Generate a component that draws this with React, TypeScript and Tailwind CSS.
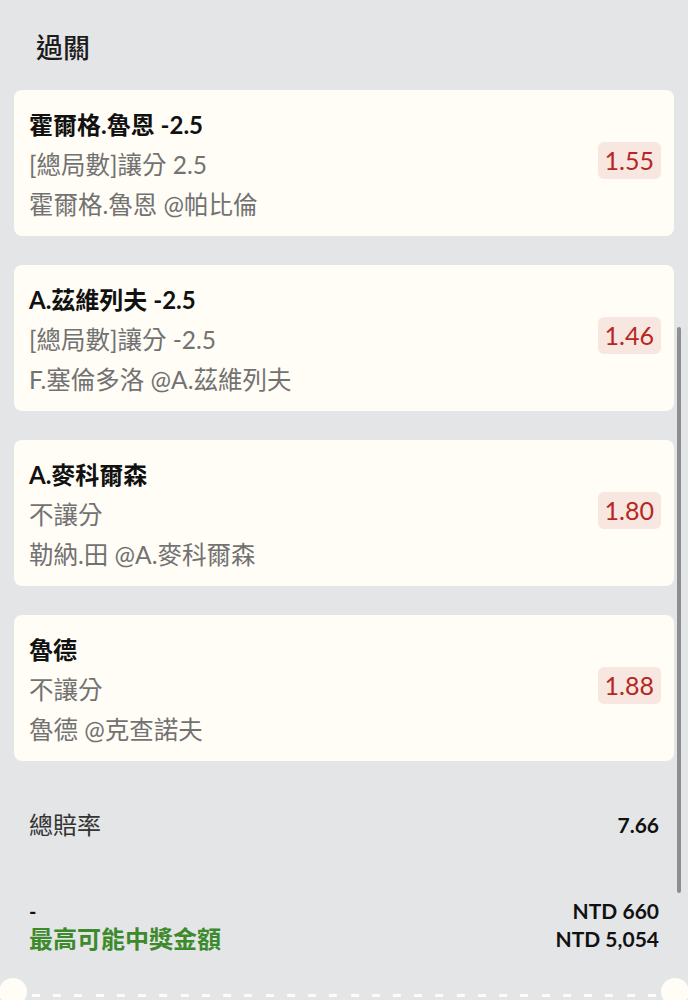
import React from 'react';

type Bet = {
  title: string;
  market: string;
  match: string;
  odds: string;
};

const bets: Bet[] = [
  { title: '霍爾格.魯恩 -2.5', market: '[總局數]讓分 2.5', match: '霍爾格.魯恩 @帕比倫', odds: '1.55' },
  { title: 'A.茲維列夫 -2.5', market: '[總局數]讓分 -2.5', match: 'F.塞倫多洛 @A.茲維列夫', odds: '1.46' },
  { title: 'A.麥科爾森', market: '不讓分', match: '勒納.田 @A.麥科爾森', odds: '1.80' },
  { title: '魯德', market: '不讓分', match: '魯德 @克查諾夫', odds: '1.88' },
];

const BetCard = ({ bet }: { bet: Bet }) => (
  <div className="flex items-center justify-between rounded-[8px] bg-[#fffdf5] pl-[15px] pr-[13px] pt-[15px] pb-[11px]">
    <div className="flex flex-col">
      <div className="text-[24px] font-bold leading-[40px] text-[#111]">{bet.title}</div>
      <div className="text-[24.5px] leading-[40px] text-[#727272]">{bet.market}</div>
      <div className="text-[24.5px] leading-[40px] text-[#727272]">{bet.match}</div>
    </div>
    <div className="-mt-[10px] rounded-[6px] bg-[#f8e6e0] px-[7px] py-[2px] text-[25px] leading-[33px] text-[#b52822]">
      {bet.odds}
    </div>
  </div>
);

const App = () => {
  return (
    <div className="relative h-[1000px] overflow-hidden bg-[#e4e5e7] font-['Lato','Noto_Sans_CJK_TC',sans-serif]">
      <div className="px-[14px]">
        <div className="flex h-[90px] items-center pl-[22px] pt-[6px] text-[27px] font-medium text-[#1c1c1c]">過關</div>

        <div className="flex flex-col gap-[29px]">
          {bets.map((bet) => (
            <BetCard key={bet.title} bet={bet} />
          ))}
        </div>

        <div className="mt-[44px] flex items-center justify-between px-[15px] leading-[40px]">
          <span className="text-[24px] text-[#333]">總賠率</span>
          <span className="text-[21px] font-bold text-[#111]">7.66</span>
        </div>

        <div className="mt-[52px] flex justify-between px-[15px] leading-[28px]">
          <div className="flex flex-col">
            <span className="text-[20px] font-bold text-[#111]">-</span>
            <span className="text-[24px] font-bold text-[#3d8a2c]">最高可能中獎金額</span>
          </div>
          <div className="flex flex-col items-end text-[21px] font-bold text-[#111]">
            <span>NTD 660</span>
            <span>NTD 5,054</span>
          </div>
        </div>
      </div>

      {/* ticket divider */}
      <div className="mt-[25px] flex items-center">
        <div className="-ml-[1px] h-[28px] w-[28px] shrink-0 rounded-full bg-[#fffdf5]" />
        <div className="mt-[6px] flex flex-1 justify-between px-[5px]">
          {Array.from({ length: 30 }).map((_, i) => (
            <span key={i} className="h-[3px] w-[8px] bg-white/90" />
          ))}
        </div>
        <div className="-mr-[1px] h-[28px] w-[28px] shrink-0 rounded-full bg-[#fffdf5]" />
      </div>

      {/* overlay scrollbar */}
      <div className="absolute left-[677px] top-[327px] h-[566px] w-[4px] rounded-full bg-[#8e8e91]" />
    </div>
  );
};

export default App;
